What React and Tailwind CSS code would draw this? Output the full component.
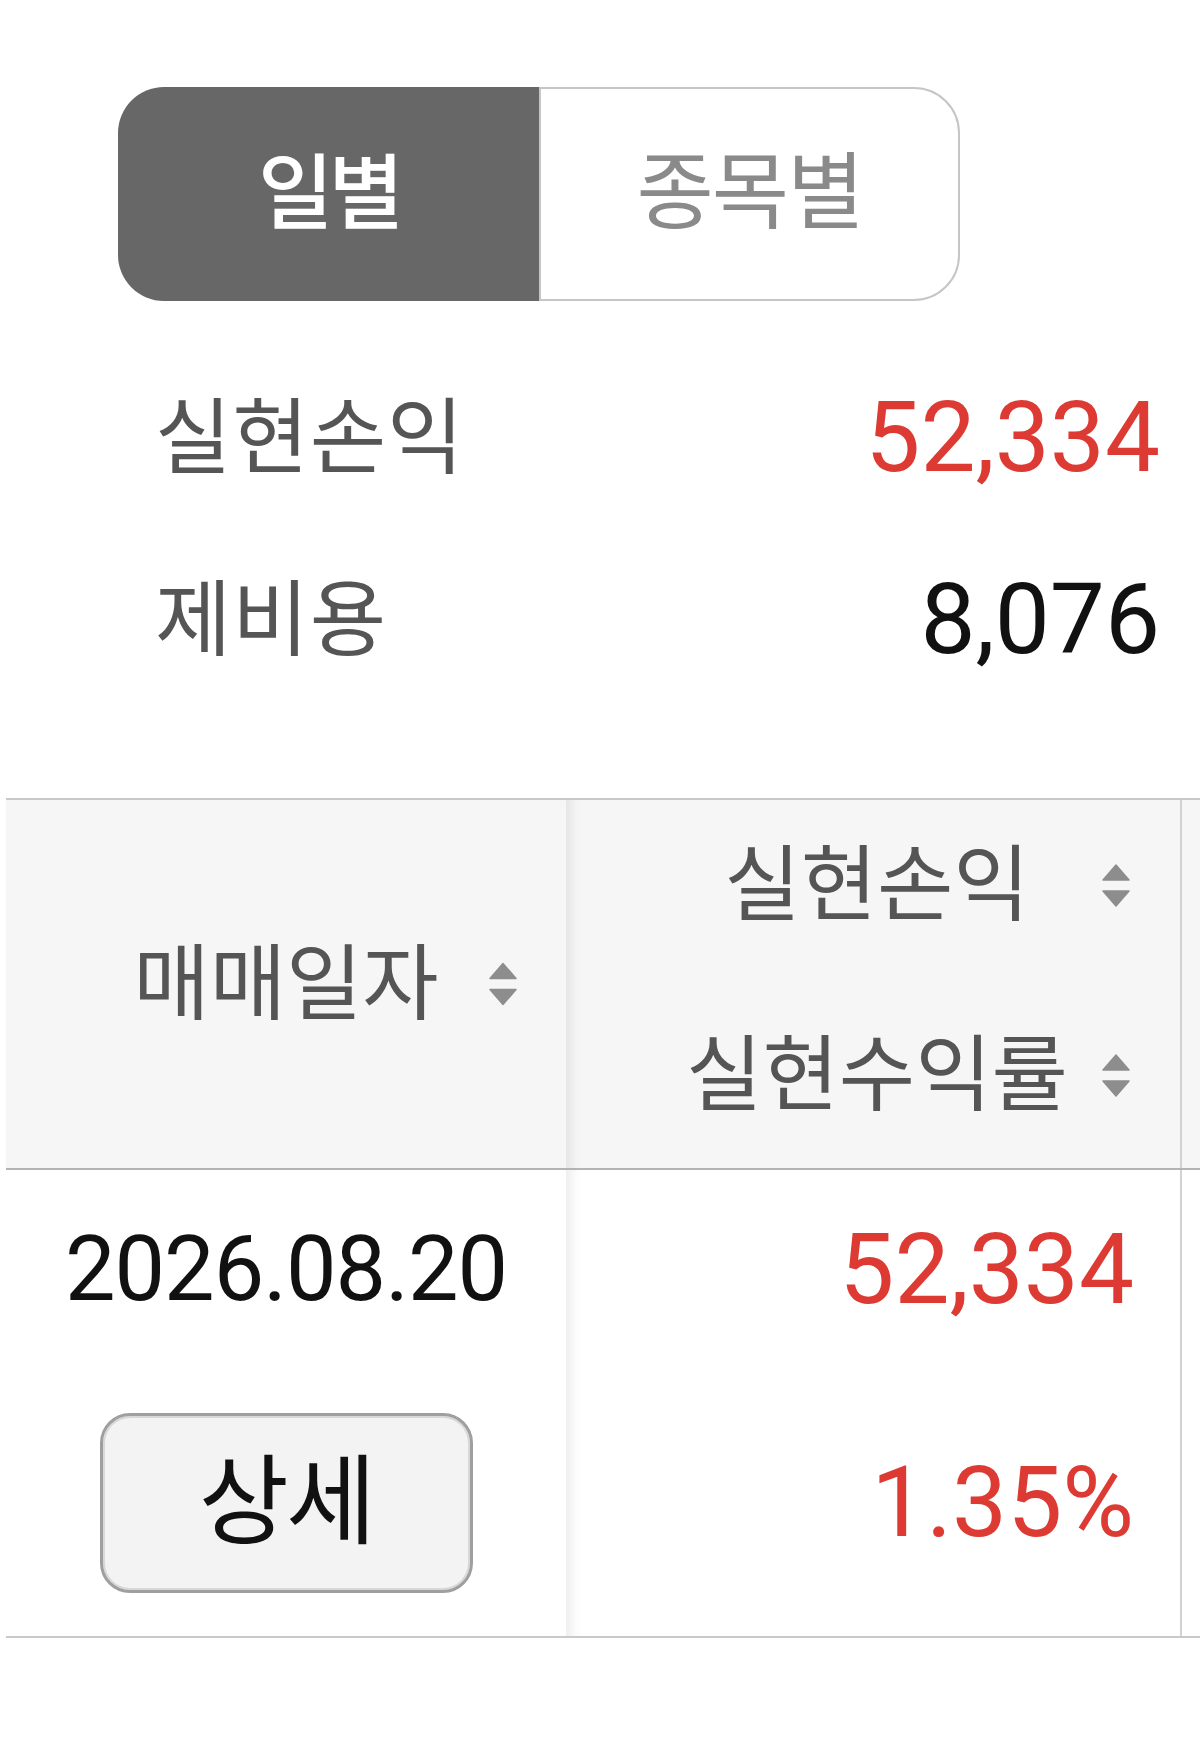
import React from "react";

const FONT = "font-['Roboto','Noto_Sans_CJK_KR',sans-serif]";

const SortIcon = () => (
  <svg width="28" height="43" viewBox="0 0 28 43" className="shrink-0">
    <path d="M14 1 L27 16 L1 16 Z" fill="#8d8d8d" stroke="#8d8d8d" strokeWidth="1.5" strokeLinejoin="round" />
    <path d="M1 27 L27 27 L14 42 Z" fill="#8d8d8d" stroke="#8d8d8d" strokeWidth="1.5" strokeLinejoin="round" />
  </svg>
);

const SummaryRow = ({ label, value, red }) => (
  <div className="flex h-[120px] items-center justify-between pl-[155px] pr-[40px]">
    <span className="text-[83px] leading-none tracking-[1px] text-[#555555]">{label}</span>
    <span className={`text-[98px] leading-none tracking-[0px] ${red ? "text-[#dc3a33]" : "text-[#111111]"}`}>
      {value}
    </span>
  </div>
);

export default function App() {
  return (
    <div className={`w-[1200px] h-[1759px] bg-white ${FONT}`}>
      {/* tab toggle */}
      <div className="pt-[87px] pl-[118px]">
        <div className="flex h-[214px] w-[842px]">
          <button className="flex w-[421px] items-center justify-center rounded-l-[46px] bg-[#676767] text-[82px] font-medium leading-none tracking-[-5px] text-white">
            일별
          </button>
          <button className="flex w-[421px] items-center justify-center rounded-r-[46px] border-2 border-[#c6c6c6] bg-white text-[84px] leading-none tracking-[-2px] text-[#8a8a8a]">
            종목별
          </button>
        </div>
      </div>

      {/* summary */}
      <div className="mt-[77px]">
        <SummaryRow label="실현손익" value="52,334" red />
        <div className="mt-[62px]">
          <SummaryRow label="제비용" value="8,076" />
        </div>
      </div>

      {/* table */}
      <div className="mt-[118px] pl-[6px]">
        {/* header */}
        <div className="grid h-[372px] grid-cols-[560px_616px_1fr] border-y-2 border-t-[#c9c9c9] border-b-[#b3b3b3] bg-[#f6f6f6]">
          <div className="flex items-center justify-center">
            <span className="relative text-[83px] leading-none tracking-[0px] text-[#555555]">
              매매일자
              <span className="absolute left-full top-1/2 ml-[50px] -translate-y-1/2">
                <SortIcon />
              </span>
            </span>
          </div>
          <div className="flex flex-col justify-center gap-[90px] border-r-2 border-[#d2d2d2] pb-[8px] pl-[86px] shadow-[inset_16px_0_14px_-12px_rgba(0,0,0,0.09)]">
            <div className="flex h-[100px] items-center">
              <span className="w-[450px] text-center text-[83px] leading-none tracking-[0px] text-[#555555]">실현손익</span>
              <SortIcon />
            </div>
            <div className="flex h-[100px] items-center">
              <span className="w-[450px] text-center text-[83px] leading-none tracking-[0px] text-[#555555]">실현수익률</span>
              <SortIcon />
            </div>
          </div>
          <div />
        </div>

        {/* body row */}
        <div className="grid h-[468px] grid-cols-[560px_616px_1fr] border-b-2 border-[#c9c9c9] bg-white">
          <div className="flex flex-col items-center pt-[45px]">
            <div className="flex h-[110px] items-center text-[90px] leading-none tracking-[-1px] text-[#111111]">
              2026.08.20
            </div>
            <button className="mt-[88px] flex h-[180px] w-[373px] items-center justify-center rounded-[30px] border-[3px] border-[#9f9f9f] bg-[#f3f3f3] text-[98px] leading-none tracking-[-3px] text-[#111111] shadow-[inset_0_0_0_2px_#d8d8d8]">
              상세
            </button>
          </div>
          <div className="flex flex-col items-end border-r-2 border-[#d2d2d2] pr-[46px] pt-[45px] shadow-[inset_16px_0_14px_-12px_rgba(0,0,0,0.09)]">
            <div className="flex h-[110px] items-center text-[98px] leading-none tracking-[0px] text-[#dc3a33]">
              52,334
            </div>
            <div className="mt-[123px] flex h-[110px] items-center text-[98px] leading-none tracking-[0px] text-[#dc3a33]">
              1.35%
            </div>
          </div>
          <div />
        </div>
      </div>
    </div>
  );
}
